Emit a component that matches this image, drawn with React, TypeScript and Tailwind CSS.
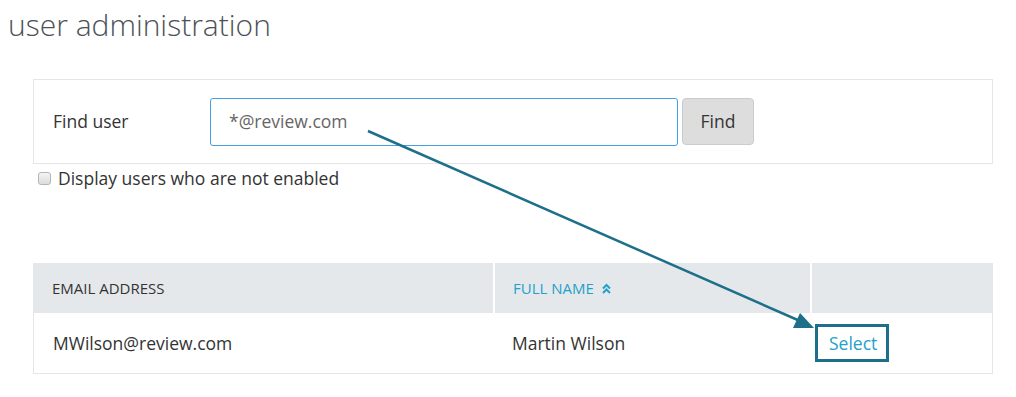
import React from "react"

const users = [{ email: "MWilson@review.com", name: "Martin Wilson" }]

function SortUpIcon() {
  return (
    <svg width="11" height="11" viewBox="0 0 11 11" className="ml-[7px] inline-block" fill="none">
      <path d="M2 5.5 L5.5 2 L9 5.5" stroke="#23a1c9" strokeWidth="2" />
      <path d="M2 10 L5.5 6.5 L9 10" stroke="#23a1c9" strokeWidth="2" />
    </svg>
  )
}

export default function App() {
  return (
    <div className="relative h-[397px] w-[1016px] overflow-hidden bg-white font-['Open_Sans',sans-serif]">
      <h1 className="pl-[8px] pt-[7px] text-[30px] font-light leading-[36px] text-[#4b5157]">
        user administration
      </h1>

      <div className="ml-[33px] mt-[36px] flex h-[85px] w-[960px] items-center border border-[#e6e6e6] pl-[19px]">
        <span className="w-[157px] text-[17.5px] text-[#333]">Find user</span>
        <div className="flex h-[48px] w-[468px] items-center rounded-[3px] border border-[#45a0e4] pl-[18px] text-[17.5px] text-[#666]">
          *@review.com
        </div>
        <button className="ml-[4px] h-[47px] w-[72px] rounded-[4px] border border-[#c9cccf] bg-[#dddddd] text-[17.5px] text-[#333]">
          Find
        </button>
      </div>

      <label className="ml-[38px] mt-[1px] flex items-center text-[17.5px] text-[#333]">
        <span className="h-[13px] w-[13px] rounded-[3px] border border-[#b5b5b5] bg-gradient-to-b from-[#f4f4f4] to-[#dcdcdc]" />
        <span className="ml-[7px]">Display users who are not enabled</span>
      </label>

      <div className="ml-[33px] mt-[72px] w-[960px]">
        <div className="flex h-[50px] bg-[#e5e8eb] text-[15px]">
          <div className="flex w-[462px] items-center border-r-2 border-white pl-[19px] text-[#333]">
            EMAIL ADDRESS
          </div>
          <div className="flex w-[317px] items-center border-r-2 border-white pl-[18px] text-[#23a1c9]">
            FULL NAME
            <SortUpIcon />
          </div>
          <div className="flex-1" />
        </div>
        {users.map((u) => (
          <div key={u.email} className="flex h-[61px] border-x border-b border-[#e6e6e6] text-[17.5px] text-[#333]">
            <div className="flex w-[459px] items-center pl-[19px]">{u.email}</div>
            <div className="flex w-[322px] items-center pl-[19px]">{u.name}</div>
            <div className="flex items-center">
              <span className="flex h-[38px] w-[74px] items-center border-[3px] border-[#1d6f8a] pl-[11px] text-[#23a1c9]">
                Select
              </span>
            </div>
          </div>
        ))}
      </div>

      <svg className="pointer-events-none absolute left-0 top-0" width="1016" height="397">
        <line x1="368" y1="131" x2="800" y2="321" stroke="#1d6f8a" strokeWidth="2.5" />
        <polygon points="814,328 793,328 800,313" fill="#1d6f8a" />
      </svg>
    </div>
  )
}
